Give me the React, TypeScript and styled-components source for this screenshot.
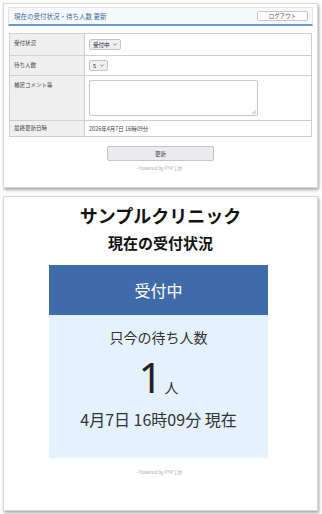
import React from "react";
import styled, { createGlobalStyle } from "styled-components";

const GlobalStyle = createGlobalStyle`
  html, body {
    margin: 0;
    padding: 0;
    background: #ffffff;
  }
  body {
    font-family: "Noto Sans CJK JP", "Noto Sans", sans-serif;
    color: #333;
  }
`;

const Page = styled.div`
  width: 322px;
  height: 514px;
  padding: 3px 4px 0 3px;
  box-sizing: border-box;
  display: flex;
  flex-direction: column;
  gap: 8px;
`;

const Card = styled.div<{ $height: number }>`
  height: ${(p) => p.$height}px;
  background: #fff;
  border: 1px solid #d8d8d8;
  box-shadow: 1px 2px 3px rgba(0, 0, 0, 0.35);
  box-sizing: border-box;
  display: flex;
  flex-direction: column;
`;

/* ---------- admin screen ---------- */

const AdminHeader = styled.div`
  margin: 3px 4px 0 4px;
  height: 19px;
  background: #f6f9fc;
  border: 1px solid #dde6ef;
  border-bottom: 2px solid #6c9ad0;
  box-sizing: border-box;
  display: flex;
  align-items: center;
  justify-content: space-between;
  padding: 0 4px 0 5px;
`;

const AdminTitle = styled.span`
  font-size: 6.5px;
  color: #3d6a9a;
`;

const SmallButton = styled.div`
  width: 51px;
  height: 10px;
  border: 1px solid #c8c8c8;
  border-radius: 2px;
  background: #fff;
  box-sizing: border-box;
  font-size: 5.5px;
  color: #555;
  display: flex;
  align-items: center;
  justify-content: center;
  white-space: nowrap;
`;

const Table = styled.div`
  margin: 7px 5px 0 5px;
  border: 1px solid #cfcfcf;
  display: grid;
  grid-template-columns: 75px 1fr;
`;

const Label = styled.div<{ $h: number; $last?: boolean }>`
  height: ${(p) => p.$h}px;
  background: #efefef;
  border-right: 1px solid #cfcfcf;
  border-bottom: ${(p) => (p.$last ? "none" : "1px solid #cfcfcf")};
  box-sizing: border-box;
  font-size: 5.5px;
  color: #444;
  padding: ${(p) => (p.$last ? "3px 0 0 4px" : "5px 0 0 4px")};
`;

const Value = styled.div<{ $h: number; $last?: boolean; $center?: boolean }>`
  height: ${(p) => p.$h}px;
  border-bottom: ${(p) => (p.$last ? "none" : "1px solid #cfcfcf")};
  box-sizing: border-box;
  padding: ${(p) => (p.$center ? "0 0 0 4px" : "4px 0 0 4px")};
  display: flex;
  align-items: ${(p) => (p.$center ? "center" : "flex-start")};
  font-size: 5.5px;
  color: #444;
`;

const FakeSelect = styled.div<{ $w: number }>`
  width: ${(p) => p.$w}px;
  height: 11px;
  border: 1px solid #c4c4c4;
  border-radius: 2px;
  background: #efeff3;
  box-sizing: border-box;
  display: flex;
  align-items: center;
  justify-content: space-between;
  padding: 0 3px;
  font-size: 5.5px;
  color: #222;
`;

const TextArea = styled.div`
  width: 169px;
  height: 36px;
  border: 1px solid #c4c4c4;
  border-radius: 2px;
  background: #fff;
  box-sizing: border-box;
  position: relative;
`;

const Grip = styled.svg`
  position: absolute;
  right: 1px;
  bottom: 1px;
`;

const Footer = styled.div`
  display: flex;
  flex-direction: column;
  align-items: center;
`;

const UpdateButton = styled.div`
  margin-top: 9px;
  width: 107px;
  height: 15px;
  border: 1px solid #c4c4c4;
  border-radius: 2px;
  background: #ebebef;
  box-sizing: border-box;
  font-size: 5.5px;
  color: #333;
  display: flex;
  align-items: center;
  justify-content: center;
`;

const Powered = styled.div<{ $top: number }>`
  margin-top: ${(p) => p.$top}px;
  font-size: 4.5px;
  color: #aaa;
  text-align: center;
`;

/* ---------- public display ---------- */

const ClinicName = styled.div`
  margin-top: 6px;
  font-size: 18px;
  font-weight: 700;
  color: #111;
  text-align: center;
  line-height: 24px;
`;

const SubTitle = styled.div`
  margin-top: 6px;
  font-size: 15px;
  font-weight: 700;
  color: #111;
  text-align: center;
  line-height: 20px;
`;

const Board = styled.div`
  margin: 12px 0 0 45px;
  width: 219px;
  display: flex;
  flex-direction: column;
`;

const StatusBar = styled.div`
  height: 50px;
  background: #3f6ca9;
  color: #fff;
  font-size: 16px;
  display: flex;
  align-items: center;
  justify-content: center;
`;

const WaitPanel = styled.div`
  height: 143px;
  background: #e5f1fd;
  display: flex;
  flex-direction: column;
  align-items: center;
  color: #333;
`;

const WaitLabel = styled.div`
  margin-top: 12px;
  font-size: 14px;
  line-height: 20px;
`;

const CountRow = styled.div`
  margin-top: 10px;
  display: flex;
  align-items: baseline;
  line-height: 40px;
`;

const CountNum = styled.span`
  font-size: 42px;
  font-family: "Noto Sans", sans-serif;
  font-weight: 400;
  color: #222;
`;

const CountUnit = styled.span`
  font-size: 14px;
  margin-left: 2px;
`;

const TimeStamp = styled.div`
  margin-top: 1px;
  font-size: 16px;
  line-height: 22px;
`;

function Chevron() {
  return (
    <svg width="4" height="3" viewBox="0 0 4 3">
      <path d="M0.5 0.8 L2 2.2 L3.5 0.8" fill="none" stroke="#444" strokeWidth="0.6" />
    </svg>
  );
}

export default function App() {
  return (
    <>
      <GlobalStyle />
      <Page>
        <Card $height={185}>
          <AdminHeader>
            <AdminTitle>現在の受付状況・待ち人数 更新</AdminTitle>
            <SmallButton>ログアウト</SmallButton>
          </AdminHeader>
          <Table>
            <Label $h={22}>受付状況</Label>
            <Value $h={22} $center>
              <FakeSelect $w={32}>
                受付中
                <Chevron />
              </FakeSelect>
            </Value>
            <Label $h={20}>待ち人数</Label>
            <Value $h={20} $center>
              <FakeSelect $w={19}>
                5
                <Chevron />
              </FakeSelect>
            </Value>
            <Label $h={45}>補足コメント等</Label>
            <Value $h={45}>
              <TextArea>
                <Grip width="4" height="4" viewBox="0 0 4 4">
                  <path d="M4 0 L0 4 M4 2 L2 4" stroke="#999" strokeWidth="0.6" />
                </Grip>
              </TextArea>
            </Value>
            <Label $h={15} $last>
              最終更新日時
            </Label>
            <Value $h={15} $last $center>
              2026年4月7日 16時09分
            </Value>
          </Table>
          <Footer>
            <UpdateButton>更新</UpdateButton>
            <Powered $top={4}>- Powered by PHP工房 -</Powered>
          </Footer>
        </Card>
        <Card $height={315}>
          <ClinicName>サンプルクリニック</ClinicName>
          <SubTitle>現在の受付状況</SubTitle>
          <Board>
            <StatusBar>受付中</StatusBar>
            <WaitPanel>
              <WaitLabel>只今の待ち人数</WaitLabel>
              <CountRow>
                <CountNum>1</CountNum>
                <CountUnit>人</CountUnit>
              </CountRow>
              <TimeStamp>4月7日 16時09分 現在</TimeStamp>
            </WaitPanel>
          </Board>
          <Powered $top={11}>- Powered by PHP工房 -</Powered>
        </Card>
      </Page>
    </>
  );
}
